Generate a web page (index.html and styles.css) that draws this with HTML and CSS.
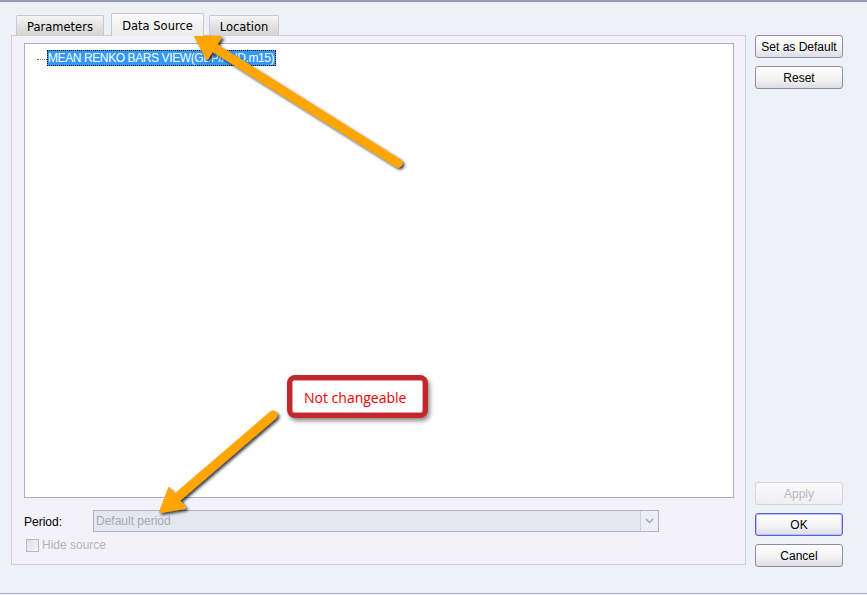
FILE: index.html
```html
<!DOCTYPE html>
<html lang="en">
<head>
    <meta charset="UTF-8">
    <title>Data Source</title>
    <link rel="stylesheet" href="styles.css">
</head>
<body>
    <div class="window">
        <div class="main">
            <div class="tabs">
                <div class="tab tab-params">Parameters</div>
                <div class="tab tab-source active">Data Source</div>
                <div class="tab tab-location">Location</div>
            </div>
            <div class="panel">
                <div class="listbox">
                    <div class="tree-item">
                        <span class="dots"></span>
                        <span class="selected">MEAN RENKO BARS VIEW(GBP/AUD.m15)</span>
                    </div>
                </div>
                <div class="period">
                    <span class="label">Period:</span>
                    <div class="combo">
                        <span>Default period</span>
                        <span class="drop">
                            <svg width="9" height="6" viewBox="0 0 9 6"><path d="M1 1 L4.5 4.5 L8 1" fill="none" stroke="#a4a8bc" stroke-width="1.5"/></svg>
                        </span>
                    </div>
                </div>
                <div class="check">
                    <span class="box"></span>
                    <span>Hide source</span>
                </div>
            </div>
        </div>
        <div class="side">
            <button class="btn">Set as Default</button>
            <button class="btn">Reset</button>
            <div class="spacer"></div>
            <button class="btn" disabled>Apply</button>
            <button class="btn ok">OK</button>
            <button class="btn">Cancel</button>
        </div>

        <svg class="arrows" width="867" height="595" viewBox="0 0 867 595">
            <defs>
                <filter id="shade" x="-20%" y="-20%" width="140%" height="140%">
                    <feDropShadow dx="2" dy="2" stdDeviation="1.6" flood-color="#000" flood-opacity="0.75"/>
                </filter>
            </defs>
            <g filter="url(#shade)" fill="#ffa500" stroke="#ffa500" stroke-linejoin="round">
                <line x1="398" y1="163" x2="210" y2="45" stroke-width="9" stroke-linecap="round"/>
                <polygon points="195,36 221,37 207,59" stroke-width="2"/>
                <line x1="273" y1="415" x2="174" y2="500" stroke-width="9" stroke-linecap="round"/>
                <polygon points="160,512 185,508 169,488" stroke-width="2"/>
            </g>
        </svg>

        <div class="callout">Not changeable</div>
    </div>
</body>
</html>
```
FILE: styles.css
```css
* {
    box-sizing: border-box;
}
body {
    margin: 0;
    background: #f0f0f7;
    font-family: "Liberation Sans", Arial, sans-serif;
    font-size: 12px;
    color: #000;
}
.window {
    position: relative;
    height: 594px;
    display: flex;
    border-top: 2px solid #9b9bb6;
    border-bottom: 1px solid #a9a9c2;
    padding: 12px 0 0 11px;
}
.main {
    width: 735px;
}
.tabs {
    display: flex;
    align-items: flex-end;
    height: 21px;
    padding-left: 5px;
    position: relative;
    z-index: 1;
}
.tab {
    font-family: "DejaVu Sans", Verdana, sans-serif;
    font-size: 11.5px;
    height: 20px;
    padding-top: 4px;
    text-align: center;
    border: 1px solid #c8c8d2;
    border-bottom: none;
    border-radius: 2px 2px 0 0;
    background: linear-gradient(#f6f6f6, #e0e0e0 60%, #d6d6d6);
}
.tab-params {
    width: 88px;
    margin-right: 7px;
}
.tab-source {
    width: 93px;
    margin-right: 5px;
}
.tab-location {
    width: 70px;
}
.tab.active {
    height: 23px;
    margin-bottom: -1px;
    padding-top: 5px;
    background: linear-gradient(#fafafa, #ececec);
}
.panel {
    height: 530px;
    border: 1px solid #cfcfda;
    background: #f2f2f8;
    padding: 7px 11px 0 12px;
}
.listbox {
    height: 455px;
    background: #fff;
    border: 1px solid #adadcf;
    padding: 6px 0 0 12px;
}
.tree-item {
    display: flex;
    align-items: center;
}
.dots {
    width: 10px;
    border-top: 1px dotted #808080;
    margin-top: 2px;
}
.selected {
    font-size: 12px;
    letter-spacing: -0.4px;
    background: #3399ff;
    color: #fff;
    padding: 1px 2px 1px 1px;
    outline: 1px dotted #000;
    outline-offset: -1px;
}
.period {
    display: flex;
    align-items: center;
    margin-top: 12px;
}
.label {
    width: 69px;
    padding-top: 1px;
}
.combo {
    width: 566px;
    height: 22px;
    border: 1px solid #b0b0c6;
    background: #e4e6f0;
    color: #a9a9b4;
    display: flex;
    align-items: center;
    justify-content: space-between;
    padding-left: 2px;
}
.drop {
    width: 18px;
    height: 20px;
    border-left: 1px solid #cfd2de;
    background: #eceef4;
    display: flex;
    align-items: center;
    justify-content: center;
}
.check {
    display: flex;
    align-items: center;
    margin-top: 6px;
    margin-left: 2px;
    color: #b4b4bc;
}
.box {
    width: 13px;
    height: 13px;
    border: 1px solid #b8b8c8;
    background: linear-gradient(135deg, #dcdce4, #f6f6f8);
    margin-right: 3px;
}
.side {
    width: 88px;
    margin-left: 9px;
    display: flex;
    flex-direction: column;
    padding-top: 21px;
}
.btn {
    font-family: "Liberation Sans", Arial, sans-serif;
    font-size: 12px;
    width: 88px;
    height: 23px;
    margin-bottom: 8px;
    border: 1px solid #8e8fa6;
    border-radius: 3px;
    background: linear-gradient(#ffffff, #f2f2f4 60%, #dcdce2);
    color: #000;
    padding: 0;
}
.btn:disabled {
    color: #b8b8c0;
    border-color: #d4d4dc;
    background: linear-gradient(#fbfbfc, #efeff2);
}
.btn.ok {
    border-color: #5c5ce0;
    box-shadow: inset 0 0 0 1px #b8c4f4;
}
.spacer {
    flex: 1;
    max-height: 385px;
}
.arrows {
    position: absolute;
    left: 0;
    top: -2px;
    pointer-events: none;
}
.callout {
    position: absolute;
    left: 287px;
    top: 373px;
    width: 141px;
    height: 43px;
    border: 5px solid #c4262e;
    border-radius: 8px;
    background: #fff;
    box-shadow: 2px 3px 4px rgba(0, 0, 0, 0.45), inset 0 0 0 1px #e6a0a4;
    color: #f00000;
    font-family: "Open Sans", "Noto Sans", sans-serif;
    font-size: 14px;
    padding: 8px 0 0 12px;
}
```
